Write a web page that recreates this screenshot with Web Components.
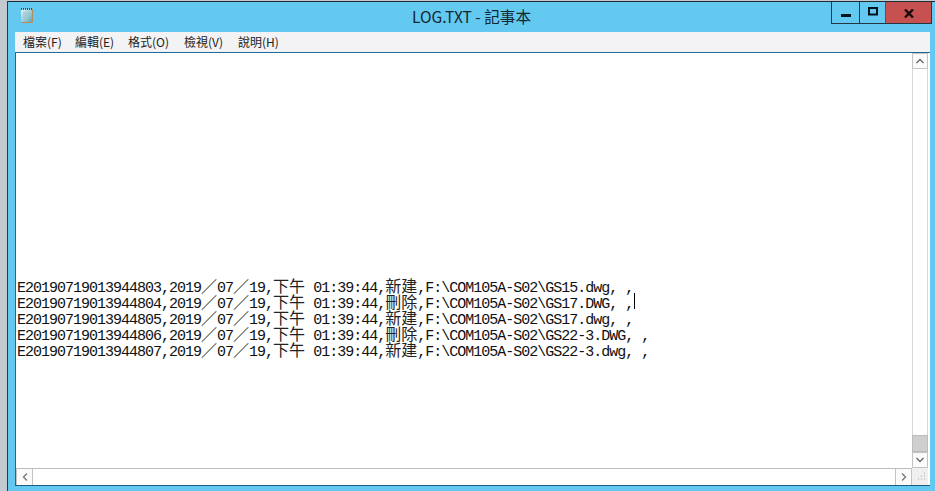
<!DOCTYPE html>
<html lang="zh-Hant">
<head>
<meta charset="utf-8">
<title>LOG.TXT - 記事本</title>
<style>
  html, body { margin: 0; height: 100%; overflow: hidden; background: #c3c9cf; }
</style>
</head>
<body>
<note-window>
  <title-bar slot="title">LOG.TXT - 記事本</title-bar>
  <menu-bar slot="menu">
    <menu-item style="width:52px">檔案(F)</menu-item>
    <menu-item style="width:53px">編輯(E)</menu-item>
    <menu-item style="width:56px">格式(O)</menu-item>
    <menu-item style="width:54px">檢視(V)</menu-item>
    <menu-item>說明(H)</menu-item>
  </menu-bar>
  <text-pane slot="pane">
    <log-line>E20190719013944803,2019／07／19,下午 01:39:44,新建,F:\COM105A-S02\GS15.dwg, ,</log-line>
    <log-line caret>E20190719013944804,2019／07／19,下午 01:39:44,刪除,F:\COM105A-S02\GS17.DWG, ,</log-line>
    <log-line>E20190719013944805,2019／07／19,下午 01:39:44,新建,F:\COM105A-S02\GS17.dwg, ,</log-line>
    <log-line>E20190719013944806,2019／07／19,下午 01:39:44,刪除,F:\COM105A-S02\GS22-3.DWG, ,</log-line>
    <log-line>E20190719013944807,2019／07／19,下午 01:39:44,新建,F:\COM105A-S02\GS22-3.dwg, ,</log-line>
  </text-pane>
</note-window>

<script>
'use strict';

function define(name, css, html, extra) {
  class Comp extends HTMLElement {
    constructor() {
      super();
      const root = this.attachShadow({mode: 'open'});
      root.innerHTML = `<style>${css}</style>${html}`;
    }
    connectedCallback() {
      if (extra) extra.call(this);
    }
  }
  customElements.define(name, Comp);
}

define('note-window', `
  :host {
    display: block;
    box-sizing: border-box;
    width: 935px;
    height: 491px;
    padding: 1px 0 0 7px;
  }
  .frame {
    box-sizing: border-box;
    height: 490px;
    background: #63c9f0;
    border-left: 1px solid #2b3a44;
    border-top: 1px solid #1f2b33;
    display: flex;
    flex-direction: column;
    padding: 0 5px 5px 7px;
  }
  .client {
    flex: 1;
    min-height: 0;
    display: flex;
    flex-direction: column;
  }
`, `
  <div class="frame">
    <slot name="title"></slot>
    <div class="client">
      <slot name="menu"></slot>
      <slot name="pane"></slot>
    </div>
  </div>
`);

define('title-bar', `
  :host {
    display: flex;
    align-items: flex-start;
    height: 30px;
    flex: none;
    margin-right: -2px;
    font: 15.6px "Noto Sans CJK TC", "Liberation Sans", sans-serif;
    color: #14262f;
  }
  svg.app { margin: 5px 0 0 4px; flex: none; }
  .text {
    flex: 1;
    text-align: center;
    line-height: 28px;
    padding-left: 77px;
  }
  .buttons {
    display: flex;
    flex: none;
    border: 1px solid #243640;
    border-top: 0;
    box-sizing: border-box;
    height: 22px;
  }
  .btn { display: flex; align-items: center; justify-content: center; }
  .min { width: 27px; border-right: 1px solid #243640; }
  .max { width: 25px; }
  .close { width: 45px; background: #c75050; border-left: 1px solid #8f3c3c; }
`, `
  <svg class="app" width="16" height="17" viewBox="0 0 16 17">
    <defs><linearGradient id="pg" x1="0" y1="0" x2="1" y2="1">
      <stop offset="0" stop-color="#e4f3f2"/><stop offset="1" stop-color="#5faabb"/>
    </linearGradient></defs>
    <rect x="2" y="2" width="11" height="13" fill="url(#pg)"/>
    <path d="M13.5 2v13.5H2" fill="none" stroke="#b08f5c"/>
    <path d="M2.5 1v2M4.5 1v2M6.5 1v2M8.5 1v2M10.5 1v2M12.5 1v2" stroke="#3d4a50"/>
    <path d="M4 6h7M4 8h7M4 10h7M4 12h5" stroke="#9cc6cf"/>
  </svg>
  <div class="text"><slot></slot></div>
  <div class="buttons">
    <div class="btn min"><svg width="10" height="10" viewBox="0 0 10 10"><rect y="6" width="10" height="3" fill="#05141c"/></svg></div>
    <div class="btn max"><svg width="10" height="9" viewBox="0 0 10 9" style="margin-bottom:3px"><rect x="1" y="1" width="8" height="6.5" fill="none" stroke="#05141c" stroke-width="2"/></svg></div>
    <div class="btn close"><svg width="10" height="9" viewBox="0 0 10 9" style="margin-top:2px"><path d="M1 .5l8 8M9 .5l-8 8" stroke="#1a0b0b" stroke-width="2.4"/></svg></div>
  </div>
`);

define('menu-bar', `
  :host {
    display: flex;
    flex: none;
    height: 20px;
    background: #f3f2f5;
    padding-left: 8px;
    align-items: center;
    font: 12px "Noto Sans CJK TC", "Liberation Sans", sans-serif;
    color: #222;
  }
`, `<slot></slot>`);

define('menu-item', `
  :host { display: block; flex: none; white-space: nowrap; line-height: 20px; }
`, `<slot></slot>`);

define('text-pane', `
  :host {
    display: grid;
    flex: 1;
    min-height: 0;
    box-sizing: border-box;
    background: #fff;
    border-top: 1px solid #1c6a9a;
    border-left: 1px solid #1c6a9a;
    border-bottom: 1px solid #1c5a80;
    grid-template-columns: 1fr 16px 2px;
    grid-template-rows: 1fr 17px;
  }
  .text {
    padding-top: 224px;
    padding-left: 1px;
    overflow: hidden;
    min-width: 0;
  }
  .vbar {
    display: flex;
    flex-direction: column;
    background: #fff;
    box-shadow: inset 1px 0 #d8d8d8, inset -1px 0 #d8d8d8;
  }
  .sb {
    height: 16px;
    box-sizing: border-box;
    flex: none;
    display: flex;
    align-items: center;
    justify-content: center;
    background: #fbfbfb;
    border: 1px solid #c4c4c4;
  }
  .spacer { flex: 1; }
  .thumb { height: 17px; flex: none; background: #cfcfcf; border: 1px solid #bcbcbc; box-sizing: border-box; }
  .hbar {
    display: flex;
    border-top: 1px solid #bdbdbd;
    background: #fff;
    grid-column: 1;
  }
  .hbar .sb { width: 17px; height: 100%; border-width: 0 1px 0 1px; }
  .corner { background: #efefef; grid-column: 2; }
  .corner svg { display: block; margin: 3px 0 0 3px; }
  .gutter { grid-row: 1 / 3; grid-column: 3; background: #fff; }
`, `
  <div class="text"><slot></slot></div>
  <div class="vbar">
    <div class="sb"><svg width="10" height="6" viewBox="0 0 10 6"><path d="M1.5 5L5 1.5 8.5 5" fill="none" stroke="#6a6a6a" stroke-width="1.4"/></svg></div>
    <div class="spacer"></div>
    <div class="thumb"></div>
    <div class="sb"><svg width="10" height="6" viewBox="0 0 10 6"><path d="M1.5 1L5 4.5 8.5 1" fill="none" stroke="#6a6a6a" stroke-width="1.4"/></svg></div>
  </div>
  <div class="gutter"></div>
  <div class="hbar">
    <div class="sb"><svg width="6" height="10" viewBox="0 0 6 10"><path d="M5 1.5L1.5 5 5 8.5" fill="none" stroke="#7a7a7a" stroke-width="1.4"/></svg></div>
    <div class="spacer"></div>
    <div class="sb"><svg width="6" height="10" viewBox="0 0 6 10"><path d="M1 1.5L4.5 5 1 8.5" fill="none" stroke="#7a7a7a" stroke-width="1.4"/></svg></div>
  </div>
  <div class="corner"><svg width="12" height="12" viewBox="0 0 12 12"><path d="M9 2h1M6 5h1M9 5h1M3 8h1M6 8h1M9 8h1" stroke="#a8a8a8"/></svg></div>
`);

// half width glyphs run in the mono font, CJK in a 16px cell like the console font
define('log-line', `
  :host {
    display: block;
    height: 16px;
    white-space: pre;
    font: 15px/16px "Liberation Mono", monospace;
    letter-spacing: -1px;
    color: #111;
  }
  .w {
    font: 16px/16px "Noto Sans CJK TC", sans-serif;
    letter-spacing: 0;
    color: #222;
  }
  .caret {
    display: inline-block;
    width: 1px;
    height: 16px;
    background: #000;
    vertical-align: top;
    margin-left: 1px;
  }
`, `<span id="out"></span>`, function() {
  const out = this.shadowRoot.getElementById('out');
  const text = this.textContent;
  text.split(/([\u3000-\u9fff\uff00-\uffef]+)/).forEach((part, i) => {
    if (!part) return;
    const span = document.createElement('span');
    if (i % 2) span.className = 'w';
    span.textContent = part;
    out.appendChild(span);
  });
  if (this.hasAttribute('caret')) {
    const c = document.createElement('span');
    c.className = 'caret';
    out.appendChild(c);
  }
});
</script>
</body>
</html>
